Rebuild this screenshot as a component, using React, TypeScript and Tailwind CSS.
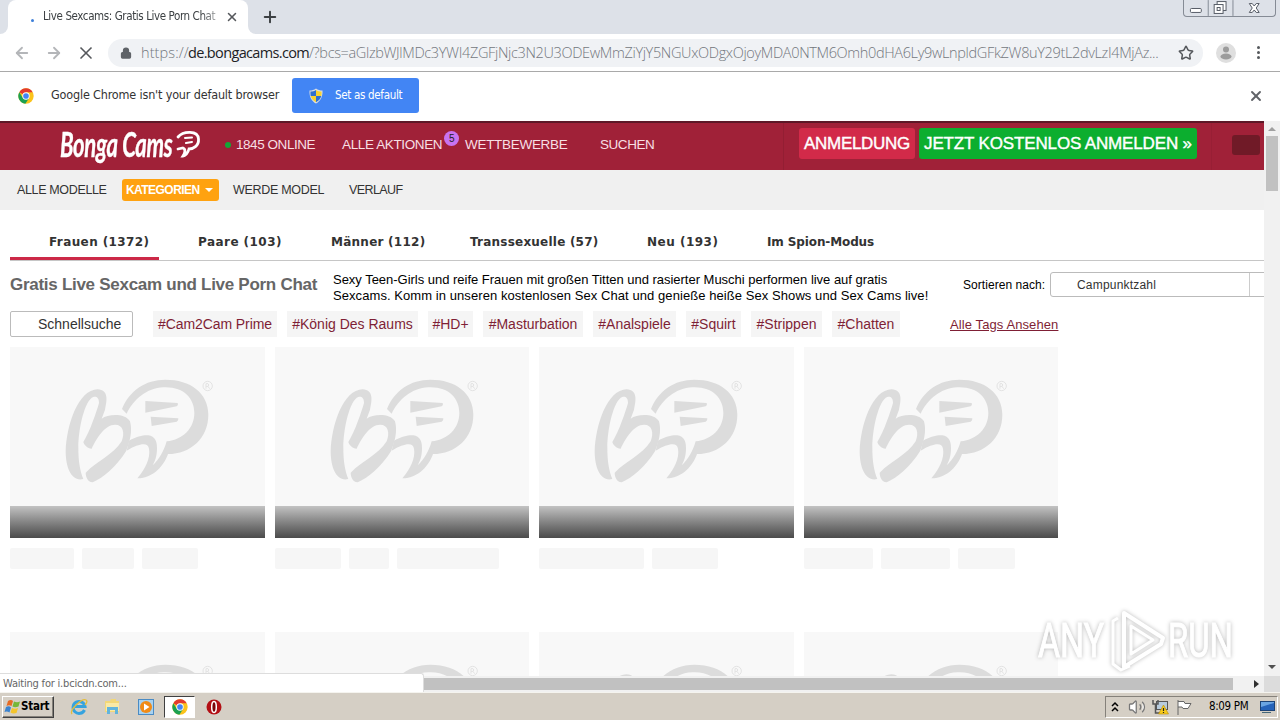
import React from "react";
import { Star, Lock, Plus, X, ArrowLeft, ArrowRight, Volume2 } from "lucide-react";

const tabs = [
  { label: "Frauen (1372)", cls: "w-[149px] pl-[39px] tracking-[0.400px]" },
  { label: "Paare (103)", cls: "w-[133px] pl-[39px] tracking-[0.450px]" },
  { label: "Männer (112)", cls: "w-[139px] pl-[39px] tracking-[0.250px]" },
  { label: "Transsexuelle (57)", cls: "w-[177px] pl-[39px] tracking-[0.220px]" },
  { label: "Neu (193)", cls: "w-[120px] pl-[39px] tracking-[0.500px]" },
  { label: "Im Spion-Modus", cls: "pl-[39px] tracking-[-0.120px]" },
];

const tags = [
  { label: "#Cam2Cam Prime", cls: "w-[124px] tracking-[-0.080px]" },
  { label: "#König Des Raums", cls: "w-[131px]" },
  { label: "#HD+", cls: "w-[45px]" },
  { label: "#Masturbation", cls: "w-[100px]" },
  { label: "#Analspiele", cls: "w-[83px]" },
  { label: "#Squirt", cls: "w-[55px]" },
  { label: "#Strippen", cls: "w-[71px]" },
  { label: "#Chatten", cls: "w-[68px]" },
];

const cards = [
  ["w-16", "w-[52px]", "w-14"],
  ["w-[66px]", "w-10", "w-[102px]"],
  ["w-[105px]", "w-[66px]"],
  ["w-[69px]", "w-[69px]", "w-[57px]"],
];

const BubbleLogo = () => (
  <svg className="w-[148px] h-[105px]" viewBox="195 100 444 315" fill="#dcdcdc">
    <path d="M366 193C388 138 436 105 496 105C572 105 625 145 625 210C625 280 572 328 504 328C492 362 462 400 412 401C436 372 452 340 447 312C444 293 420 294 380 318L387 288C410 275 430 271 445 272C465 275 471 290 471 310C471 335 465 350 458 362C478 344 492 318 500 290C550 285 583 250 583 205C583 160 550 125 490 128C440 130 400 165 380 207Z" />
    <path d="M250 403C215 412 197 370 197 320C200 240 235 135 293 134C325 136 322 165 315 195L305 222C325 208 375 205 390 230C398 260 390 290 378 320C350 365 310 400 278 413C262 412 257 395 257 384C290 350 340 330 365 290C375 265 370 240 345 240C315 240 290 280 275 312C262 312 252 300 250 292C270 260 290 200 297 175C297 160 290 155 280 157C255 165 235 250 235 310C235 350 240 380 250 403Z" />
    <path d="M436 169L533 175Q536 182 530 185L436 204ZM452 216L535 221Q536 228 530 231L455 244Z" />
    <circle cx="623" cy="124" r="14" fill="none" stroke="#e3e3e3" strokeWidth="3" />
    <path d="M618 132V117H624Q629 121 624 125H618M624 125L629 132" fill="none" stroke="#e3e3e3" strokeWidth="3" />
  </svg>
);

const ChromeIcon = () => (
  <svg className="w-4 h-4" viewBox="0 0 48 48">
    <circle cx="24" cy="24" r="23" fill="#fbc31b" />
    <path d="M24 24L4 12.500A23 23 0 0 1 44 12.500H24Z" fill="#e33b2e" />
    <path d="M4 12.500A23 23 0 0 0 22 47L34 29L24 24L14 29Z" fill="#1ba152" />
    <circle cx="24" cy="24" r="11" fill="#fff" />
    <circle cx="24" cy="24" r="8.500" fill="#4285f4" />
  </svg>
);

const ShieldIcon = () => (
  <svg className="w-4 h-4" viewBox="0 0 16 16">
    <path d="M8 .5C10 2 12 2.500 14.500 2.500C15 9 12 13.500 8 15.500C4 13.500 1 9 1.500 2.500C4 2.500 6 2 8 .5Z" fill="#d8dde3" />
    <path d="M8 2V8H2.700C2.400 6.500 2.400 5 2.500 3.600C4.500 3.500 6.500 3 8 2Z" fill="#2f6fd0" />
    <path d="M8 2V8H13.300C13.600 6.500 13.600 5 13.500 3.600C11.500 3.500 9.500 3 8 2Z" fill="#f8d230" />
    <path d="M8 8V14.200C5.500 12.800 3.500 11 2.700 8Z" fill="#f8d230" />
    <path d="M8 8V14.200C10.500 12.800 12.500 11 13.300 8Z" fill="#2f6fd0" />
  </svg>
);

const Browser = () => (
  <>
    <div className="h-[34px] bg-[#dde1e8] flex items-start">
      <div className="w-2 h-[34px] bg-white">
        <div className="h-full bg-[#dde1e8] rounded-br-lg" />
      </div>
      <div className="w-[240px] h-[34px] bg-white rounded-t-lg flex items-center pl-[23px]">
        <span className="w-[3px] h-[3px] mt-[6px] rounded-full bg-[#3d7fd9]" />
        <span className="ml-[9px] w-[176px] whitespace-nowrap text-[11.500px] tracking-[-0.400px] text-[#3c4043] [mask-image:linear-gradient(90deg,#000_90%,transparent_104%)]">
          Live Sexcams: Gratis Live Porn Chat
        </span>
        <X className="ml-[6px] w-[14px] h-[14px] text-[#55585c]" strokeWidth={2.6} />
      </div>
      <div className="w-2 h-[34px] bg-white">
        <div className="h-full bg-[#dde1e8] rounded-bl-lg" />
      </div>
      <Plus className="ml-[5px] mt-[8px] w-[18px] h-[18px] text-[#3c4043]" strokeWidth={2.6} />
      <div className="ml-auto mr-[4px] h-[17px] w-[93px] flex border border-t-0 border-[#858b95] rounded-b-[4px] text-[#555b65]">
        <svg className="w-[92px] h-4" viewBox="0 0 92 16" fill="none" stroke="currentColor">
          <path d="M24.500 0V16M49.500 0V16" stroke="#858b95" />
          <rect x="6.500" y="8.500" width="11" height="4" rx="1" fill="#fff" />
          <rect x="33.500" y="1.500" width="9" height="9" fill="#fff" />
          <rect x="30.500" y="4.500" width="9" height="9" fill="#fff" />
          <rect x="33.500" y="7.500" width="3" height="3" />
          <path d="M66 3.500H69L71 6L73 3.500H76L73 8L76 12.500H73L71 10L69 12.500H66L69 8Z" fill="#fff" />
        </svg>
      </div>
    </div>

    <div className="h-[38px] bg-white border-b border-[#a9a9a9] flex items-center">
      <ArrowLeft className="ml-[13px] w-[18px] h-[18px] text-[#b4b6b9]" strokeWidth={2.400} />
      <ArrowRight className="ml-[14px] w-[18px] h-[18px] text-[#b4b6b9]" strokeWidth={2.400} />
      <X className="ml-[13px] w-5 h-5 text-[#55585c]" strokeWidth={2} />
      <div className="ml-[12px] w-[1095px] h-7 rounded-full bg-[#f0f2f5] flex items-center pl-[12px] pr-[9px]">
        <Lock className="w-3 h-3 shrink-0 text-[#5f6368]" fill="#5f6368" strokeWidth={2.500} />
        <span className="ml-[9px] w-[1037px] shrink-0 whitespace-nowrap text-[14.500px] tracking-[-0.350px] font-light font-['Open_Sans','Noto_Sans',sans-serif] text-[#73777d]">
          <span className="inline-block w-[47px] tracking-[0.100px]">https://</span>
          <span className="inline-block w-[121px] tracking-[-0.650px] text-[#202124] font-normal">de.bongacams.com</span>
          /?bcs=aGlzbWJlMDc3YWI4ZGFjNjc3N2U3ODEwMmZiYjY5NGUxODgxOjoyMDA0NTM6Omh0dHA6Ly9wLnpldGFkZW8uY29tL2dvLzI4MjAz...
        </span>
        <Star className="w-4 h-4 shrink-0 text-[#55585c]" strokeWidth={2.300} />
      </div>
      <svg className="ml-[13px] w-5 h-5" viewBox="0 0 20 20">
        <circle cx="10" cy="10" r="10" fill="#dfdfdf" />
        <circle cx="10" cy="6.500" r="3" fill="#9c9c9c" />
        <ellipse cx="10" cy="13.500" rx="5.500" ry="3" fill="#9c9c9c" />
      </svg>
      <div className="ml-[21px] flex flex-col gap-[2px]">
        <span className="w-[3px] h-[3px] rounded-full bg-[#55585c]" />
        <span className="w-[3px] h-[3px] rounded-full bg-[#55585c]" />
        <span className="w-[3px] h-[3px] rounded-full bg-[#55585c]" />
      </div>
    </div>

    <div className="h-[49px] bg-white flex items-center pl-[18px] pr-[16px] pb-[2px] text-[12.500px] text-[#333]">
      <ChromeIcon />
      <span className="ml-[17px] w-[241px] whitespace-nowrap tracking-[-0.170px]">Google Chrome isn't your default browser</span>
      <button className="w-[127px] h-[35px] rounded-[3px] bg-[#4285f4] text-white flex items-center pl-4 text-[11.500px] tracking-[-0.320px] whitespace-nowrap">
        <ShieldIcon />
        <span className="ml-[11px]">Set as default</span>
      </button>
      <X className="ml-auto w-4 h-4 text-[#606368]" strokeWidth={2.800} />
    </div>
  </>
);

const Header = () => (
  <div className="h-[49px] bg-[#a02138] border-t-2 border-[#5d1827] flex items-start text-[13.500px] tracking-[-0.450px] text-[#f7dfe4] whitespace-nowrap">
    <div className="ml-[60px] mt-[2px] w-[165px] h-10 flex text-white tracking-[-0.500px]">
      <span className="w-[116px] origin-left scale-x-[0.650] font-['Lato','Open_Sans',sans-serif] italic font-bold text-[34px] leading-[38px] [-webkit-text-stroke:0.400px_white]">
        Bonga Cams
      </span>
      <svg className="mt-[4px] w-[26px] h-[30px]" viewBox="0 0 26 30" fill="none" stroke="#fff" strokeLinecap="round">
        <path d="M2 8C7 2 22 1 22.500 10C23 17 17 20 13 20C12 24 9 27 7 27C9 24 10 20 7 19L2 20" strokeWidth="2.800" />
        <path d="M9 9L16 8.500M10 14L16 13" strokeWidth="2" />
      </svg>
    </div>
    <span className="mt-[19px] w-[6px] h-[6px] rounded-full bg-[#14a637]" />
    <span className="ml-[5px] mt-[12px] w-[106px]">1845 ONLINE</span>
    <span className="mt-[12px] w-[102px] tracking-[-0.370px]">ALLE AKTIONEN</span>
    <span className="mt-[8px] w-[15px] h-[15px] rounded-full bg-[#c873f0] text-[#222] text-[10px] leading-[15px] text-center">5</span>
    <span className="ml-[6px] mt-[12px] w-[135px] tracking-[-0.300px]">WETTBEWERBE</span>
    <span className="mt-[12px] w-[183px]">SUCHEN</span>
    <div className="w-px h-[47px] bg-[#931e33]" />
    <button className="ml-[15px] mt-[5px] w-[116px] h-[31px] rounded-[3px] bg-[#d22a49] text-white text-[17px] tracking-[-0.300px] [-webkit-text-stroke:0.400px_white]">
      ANMELDUNG
    </button>
    <button className="ml-[4px] mt-[5px] w-[278px] h-[31px] rounded-[3px] bg-[#0cae2f] text-white text-[17px] tracking-[-0.150px] [-webkit-text-stroke:0.400px_white]">
      JETZT KOSTENLOS ANMELDEN »
    </button>
    <div className="ml-[14px] w-px h-[47px] bg-[#981f35]" />
    <div className="ml-[20px] mt-[12px] w-7 h-5 rounded-[3px] bg-[#701a27]" />
  </div>
);

const CardRow = () => (
  <div className="flex gap-[10px]">
    {cards.map((blocks, i) => (
      <div key={i} className="w-[254.600px] h-[275px] shrink-0">
        <div className="h-[159px] bg-[#f8f8f8] pl-[55px] pt-[31px]">
          <BubbleLogo />
        </div>
        <div className="h-8 bg-linear-to-b from-[#c3c3c3] to-[#4b4b4b]" />
        <div className="mt-[10px] flex gap-2">
          {blocks.map((w, j) => (
            <div key={j} className={`${w} h-[21px] rounded-[2px] bg-[#f6f6f6]`} />
          ))}
        </div>
      </div>
    ))}
  </div>
);

const Page = () => (
  <div className="w-[1264px] h-[555px] overflow-hidden bg-white font-['Liberation_Sans',Arial,sans-serif]">
    <Header />
    <div className="h-10 bg-[#f0f0f0] flex items-center text-[12.500px] tracking-[-0.350px] text-[#333] whitespace-nowrap">
      <span className="ml-[17px] w-[105px]">ALLE MODELLE</span>
      <span className="w-[97px] h-[22px] rounded-[3px] bg-[#ffa210] text-white font-bold text-[12px] tracking-[-0.550px] leading-[22px] pl-[4px] flex items-center">
        KATEGORIEN
        <span className="ml-[5px] border-x-4 border-t-4 border-x-transparent border-t-white" />
      </span>
      <span className="ml-[14px] w-[116px] tracking-[-0.300px]">WERDE MODEL</span>
      <span className="tracking-[-0.600px]">VERLAUF</span>
    </div>
    <div className="ml-[10px] h-[51px] border-b border-[#c6c6c6] flex font-['DejaVu_Sans',Verdana,sans-serif] font-bold text-[12px] text-[#333] whitespace-nowrap">
      {tabs.map((tab, i) => (
        <div key={tab.label} className={`${tab.cls} h-[50px] leading-[64px] ${i === 0 ? "border-b-[3px] border-[#cc2947]" : ""}`}>
          {tab.label}
        </div>
      ))}
    </div>
    <div className="h-[50px] pl-[10px] flex items-start whitespace-nowrap">
      <h1 className="w-[323px] shrink-0 mt-[12px] text-[17px] leading-6 font-bold text-[#666] tracking-[-0.280px]">
        Gratis Live Sexcam und Live Porn Chat
      </h1>
      <p className="w-[630px] shrink-0 mt-[11px] text-[13px] leading-4 text-black tracking-[0.070px]">
        <span className="tracking-[-0.020px]">
          Sexy Teen-Girls und reife Frauen mit großen Titten und rasierter Muschi performen live auf gratis
        </span>
        <br />
        Sexcams. Komm in unseren kostenlosen Sex Chat und genieße heiße Sex Shows und Sex Cams live!
      </p>
      <span className="w-[87px] shrink-0 mt-[16px] text-[12px] leading-4 text-black tracking-[0.050px]">Sortieren nach:</span>
      <div className="mt-[11px] w-[230px] h-[25px] shrink-0 border border-[#bbb] rounded-[3px] flex text-[12px] leading-[24px] text-[#333]">
        <span className="w-[199px] pl-[26px] border-r border-[#ccc] tracking-[0.200px]">Campunktzahl</span>
      </div>
    </div>
    <div className="h-[26px] pl-[10px] flex text-[14px] leading-[26px] text-[#7f1f35] whitespace-nowrap">
      <div className="w-[123px] h-[26px] mr-5 pl-[27px] leading-6 border border-[#bbb] rounded-[2px] text-[#333]">Schnellsuche</div>
      <div className="flex gap-[10px] w-[797px]">
        {tags.map((tag) => (
          <span key={tag.label} className={`${tag.cls} text-center bg-[#f5f5f5]`}>
            {tag.label}
          </span>
        ))}
      </div>
      <a className="text-[13px] leading-[27px] underline tracking-[0.100px]">Alle Tags Ansehen</a>
    </div>
    <div className="ml-[10px] mt-[10px] flex flex-col gap-[10px]">
      <CardRow />
      <CardRow />
    </div>
  </div>
);

const Watermark = () => (
  <div className="absolute left-[1038px] top-[607px] w-[200px] h-[68px] flex items-center text-white font-['Liberation_Sans_Narrow','Roboto',sans-serif] text-[49px] leading-[68px] [-webkit-text-stroke:1px_white] drop-shadow-[0_0_2px_rgba(0,0,0,0.280)]">
    <span className="w-[70px] shrink-0 origin-left scale-x-[0.690]">ANY</span>
    <svg className="w-[58px] h-[66px] shrink-0" viewBox="0 0 58 66" fill="none" stroke="#fff" strokeWidth="4" strokeLinejoin="round">
      <path d="M16 5L55 30L53 36L16 59Z" />
      <path d="M10 10L5 13V56L13 62L22 58M23 18V46L45 32Z" strokeWidth="3" />
    </svg>
    <span className="ml-[2px] origin-left scale-x-[0.670]">RUN</span>
  </div>
);

const Taskbar = () => (
  <div className="h-7 bg-[#d5cfc5] border-t border-[#f5f4ef] flex items-center text-black text-[11px]">
    <button className="ml-[2px] w-[52px] h-[22px] border border-t-white border-l-white border-r-[#404040] border-b-[#404040] shadow-[inset_-1px_-1px_#85817a] flex items-center pl-px">
      <svg className="w-[17px] h-4 shrink-0" viewBox="0 0 17 16">
        <path d="M4 2Q7 0 9 2L7.500 7Q5 5.500 2.500 7Z" fill="#e66b24" />
        <path d="M10 2.500Q13 4 16 2.500L14.500 7.500Q11 9 8.500 7.500Z" fill="#75b739" />
        <path d="M2 8Q5 6.500 7 8.500L5.500 13.500Q3 12 .5 13Z" fill="#3a83cf" />
        <path d="M8 9Q11 10.500 14 9L12.500 14Q9 15 6.500 13.500Z" fill="#f4c52c" />
      </svg>
      <span className="font-bold text-[11.500px] tracking-[-0.250px]">Start</span>
    </button>
    <svg className="ml-[16px] w-[18px] h-[18px]" viewBox="0 0 18 18" fill="none">
      <path d="M14.500 12A6 6 0 1 1 15 8.500H5" stroke="#35a3df" strokeWidth="3" />
      <path d="M2 16C-1 12 12 0 16 2C18 3 16 6 15 7" stroke="#e4bd3a" strokeWidth="1.300" />
    </svg>
    <svg className="ml-[16px] w-[17px] h-[17px]" viewBox="0 0 17 17">
      <path d="M1 3H6L7 1H12V3H15V14H1Z" fill="#f2d778" />
      <path d="M2 5H15V13H2Z" fill="#f9e9a6" />
      <path d="M3 16V9H14V16H11V12H6V16Z" fill="#62b4dc" />
    </svg>
    <svg className="ml-[17px] w-4 h-4" viewBox="0 0 16 16">
      <rect x=".5" y=".5" width="15" height="15" fill="#a8d2f0" stroke="#4a8bc4" />
      <circle cx="8" cy="8" r="6" fill="#f18b16" />
      <path d="M6 4.500L11.500 8L6 11.500Z" fill="#fff" />
    </svg>
    <div className="ml-[10px] w-[31px] h-[22px] bg-white border border-t-[#404040] border-l-[#404040] border-r-white border-b-white flex items-center justify-center">
      <ChromeIcon />
    </div>
    <svg className="ml-[11px] w-4 h-4" viewBox="0 0 16 16">
      <circle cx="8" cy="8" r="7.500" fill="#b30f14" />
      <ellipse cx="8" cy="8" rx="2.300" ry="5.500" fill="#7a0508" stroke="#fff" strokeWidth="1.500" />
    </svg>
    <div className="ml-auto mr-[2px] w-[173px] h-[22px] border border-t-[#85817a] border-l-[#85817a] border-r-white border-b-white flex items-center">
      <svg className="ml-[5px] w-2 h-3" viewBox="0 0 8 12" fill="none" stroke="#000" strokeWidth="1.500">
        <path d="M1 5L4 2L7 5M1 10L4 7L7 10" />
      </svg>
      <Volume2 className="ml-[9px] w-[18px] h-[18px] text-[#777]" fill="#fff" strokeWidth={1.700} />
      <svg className="ml-[6px] w-[17px] h-4" viewBox="0 0 17 16">
        <rect x="4.500" y="2.500" width="11" height="8" fill="#b8cbdc" stroke="#555" />
        <path d="M1 1V5H6V1M3.500 5V14H8" fill="none" stroke="#555" strokeWidth="1.500" />
        <path d="M11.500 6L16.500 15H6.500Z" fill="#f8cb1c" stroke="#b98b00" strokeWidth=".6" />
        <path d="M11.500 9V12M11.500 13V14" stroke="#222" strokeWidth="1.200" />
      </svg>
      <svg className="ml-[7px] w-4 h-4" viewBox="0 0 16 16" fill="#fff" stroke="#666">
        <path d="M2 1V16M2 2.500H8L9 4.500H15L12 9.500H7L6 8H2" />
      </svg>
      <span className="ml-[17px] w-[51px] whitespace-nowrap text-[11.500px] tracking-[-0.350px]">8:09 PM</span>
      <svg className="w-[15px] h-[14px]" viewBox="0 0 15 14">
        <rect x=".5" y="1.500" width="14" height="9" fill="#2563b9" stroke="#1c4376" />
        <path d="M1 7L14 3V2H1Z" fill="#6aa5e2" />
        <path d="M2 12.500H11" stroke="#467" />
      </svg>
    </div>
  </div>
);

const App: React.FC = () => {
  return (
    <div className="relative w-[1280px] h-[720px] overflow-hidden bg-white font-['DejaVu_Sans_Condensed','DejaVu_Sans',Tahoma,sans-serif]">
      <Browser />
      <div className="flex">
        <Page />
        <div className="w-4 h-[555px] bg-[#f1f1f1] flex flex-col items-center">
          <span className="mt-[6px] border-x-4 border-b-4 border-x-transparent border-b-[#a0a0a0]" />
          <div className="mt-[5px] w-3 h-[55px] bg-[#c1c1c1]" />
          <span className="mt-auto mb-[7px] border-x-4 border-t-4 border-x-transparent border-t-[#505050]" />
        </div>
      </div>
      <div className="h-4 bg-[#f1f1f1] flex items-center">
        <div className="ml-[424px] w-[809px] h-3 bg-[#c1c1c1]" />
        <span className="ml-[21px] border-y-4 border-l-[5px] border-y-transparent border-l-[#303030]" />
        <span className="ml-auto w-4 h-4 bg-[#dcdcdc]" />
      </div>
      <Taskbar />
      <div className="absolute left-0 top-[673px] w-[424px] h-[19px] bg-white border-t border-r border-[#ddd] rounded-tr-[3px] pl-[3px] text-[11px] leading-[20px] tracking-[-0.200px] text-[#666]">
        Waiting for i.bcicdn.com...
      </div>
      <Watermark />
    </div>
  );
};

export default App;
